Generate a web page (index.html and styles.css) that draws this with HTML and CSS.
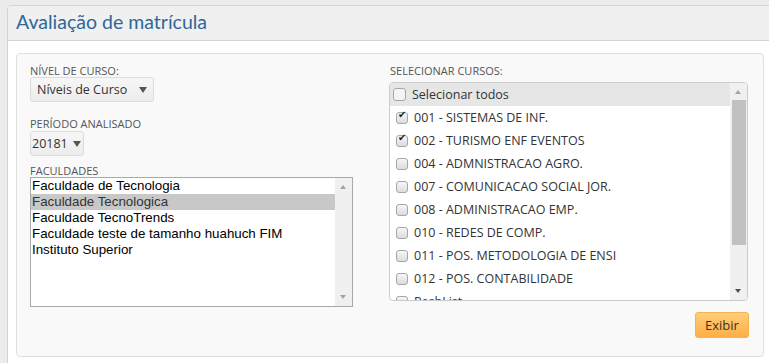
FILE: index.html
```html
<!DOCTYPE html>
<html lang="pt-BR">
<head>
  <meta charset="UTF-8">
  <meta name="viewport" content="width=device-width, initial-scale=1.0">
  <title>Avaliação de matrícula</title>
  <link rel="stylesheet" href="styles.css">
</head>
<body>
  <div class="panel">
    <div class="panel-heading">
      <h1 class="panel-title">Avaliação de matrícula</h1>
    </div>

    <div class="panel-body">
      <div class="well">
        <!-- Filtros -->
        <div class="col">
          <div class="field-label">NÍVEL DE CURSO:</div>
          <div class="select select-nivel"><span>Níveis de Curso</span><span class="caret"></span></div>

          <div class="field-label label-periodo">PERÍODO ANALISADO</div>
          <div class="select select-periodo"><span>20181</span><span class="caret"></span></div>

          <div class="field-label label-faculdades">FACULDADES</div>
          <div class="listbox">
            <ul class="listbox-items">
              <li>Faculdade de Tecnologia</li>
              <li class="selected">Faculdade Tecnologica</li>
              <li>Faculdade TecnoTrends</li>
              <li>Faculdade teste de tamanho huahuch FIM</li>
              <li>Instituto Superior</li>
            </ul>
            <div class="scrollbar">
              <span class="arrow-up"></span>
              <span class="track"></span>
              <span class="arrow-down"></span>
            </div>
          </div>
        </div>

        <!-- Cursos -->
        <div class="col">
          <div class="field-label label-cursos">SELECIONAR CURSOS:</div>
          <div class="course-list">
            <div class="course-items">
              <div class="course select-all"><span class="cb"></span>Selecionar todos</div>
              <div class="course"><span class="cb checked"></span>001 - SISTEMAS DE INF.</div>
              <div class="course"><span class="cb checked"></span>002 - TURISMO ENF EVENTOS</div>
              <div class="course"><span class="cb"></span>004 - ADMNISTRACAO AGRO.</div>
              <div class="course"><span class="cb"></span>007 - COMUNICACAO SOCIAL JOR.</div>
              <div class="course"><span class="cb"></span>008 - ADMINISTRACAO EMP.</div>
              <div class="course"><span class="cb"></span>010 - REDES DE COMP.</div>
              <div class="course"><span class="cb"></span>011 - POS. METODOLOGIA DE ENSI</div>
              <div class="course"><span class="cb"></span>012 - POS. CONTABILIDADE</div>
              <div class="course"><span class="cb"></span>PeshList</div>
            </div>
            <div class="scrollbar">
              <span class="arrow-up"></span>
              <span class="track"><span class="thumb"></span></span>
              <span class="arrow-down dark"></span>
            </div>
          </div>
          <div class="actions">
            <button class="btn-exibir">Exibir</button>
          </div>
        </div>
      </div>
    </div>
  </div>
</body>
</html>
```

FILE: styles.css
```css
html {
  overflow: hidden;
}

body {
  font-family: 'Open Sans', 'Noto Sans', sans-serif;
  margin: 0;
  padding: 0;
  background-color: #ececec;
  color: #333333;
}

.panel {
  margin: 5px -4px 0 7px;
  background-color: #ffffff;
  border: 1px solid #d4d4d4;
  border-radius: 4px;
}

.panel-heading {
  background-color: #f0f0f0;
  border-bottom: 1px solid #d4d4d4;
  border-radius: 4px 4px 0 0;
  height: 34px;
  padding: 0 8px;
}

.panel-title {
  margin: 0;
  font-family: 'Lato', 'Open Sans', sans-serif;
  font-size: 19.5px;
  font-weight: normal;
  line-height: 31px;
  color: #2f679a;
}

.panel-body {
  padding: 12px 8px 20px 8px;
}

.well {
  display: grid;
  grid-template-columns: 359px 359px;
  background-color: #f9f9f9;
  border: 1px solid #e0e0e0;
  border-radius: 4px;
  padding: 10px 13px 18px 13px;
}

.field-label {
  font-size: 11px;
  line-height: 13px;
  color: #555555;
}

.label-periodo {
  margin-top: 15px;
}

.label-faculdades {
  margin-top: 8px;
}

.label-cursos {
  margin-left: 1px;
  margin-bottom: 5px;
}

/* selects */
.select {
  display: flex;
  align-items: center;
  justify-content: space-between;
  box-sizing: border-box;
  height: 25px;
  font-size: 12.5px;
  color: #333333;
  background: linear-gradient(#f7f7f7, #ececec);
  border: 1px solid #dcdcdc;
  border-radius: 3px;
}

.select-nivel {
  width: 124px;
  padding: 0 6px 0 6px;
}

.select-periodo {
  justify-content: flex-start;
  gap: 5px;
  width: 54px;
  padding: 0 0 0 1px;
  margin-top: 1px;
}

.caret {
  width: 0;
  height: 0;
  border-left: 4px solid transparent;
  border-right: 4px solid transparent;
  border-top: 6px solid #555555;
}

/* faculdades list */
.listbox {
  display: flex;
  width: 323px;
  height: 130px;
  box-sizing: border-box;
  border: 1px solid #a9a9a9;
  background-color: #ffffff;
}

.listbox-items {
  flex: 1;
  list-style: none;
  margin: 0;
  padding: 0;
  font-family: 'Liberation Sans', Arial, sans-serif;
  font-size: 13.33px;
  line-height: 16px;
  color: #000000;
}

.listbox-items li {
  padding-left: 1px;
  white-space: nowrap;
}

.listbox-items li.selected {
  background-color: #c8c8c8;
  color: #333333;
}

.scrollbar {
  display: flex;
  flex-direction: column;
  align-items: center;
  width: 17px;
  background-color: #f0f0f0;
}

.arrow-up, .arrow-down {
  flex: none;
  height: 17px;
  width: 17px;
  position: relative;
}

.arrow-up::after, .arrow-down::after {
  content: '';
  position: absolute;
  left: 5px;
  top: 7px;
  border-left: 3.5px solid transparent;
  border-right: 3.5px solid transparent;
}

.arrow-up::after {
  border-bottom: 4px solid #a3a3a3;
}

.arrow-down::after {
  border-top: 4px solid #a3a3a3;
  top: 6px;
}

.arrow-down.dark::after {
  border-top-color: #505050;
}

.track {
  flex: 1;
  width: 100%;
  display: flex;
  justify-content: center;
}

.thumb {
  width: 14px;
  height: 145px;
  background-color: #c1c1c1;
}

/* cursos list */
.course-list {
  display: flex;
  height: 219px;
  box-sizing: border-box;
  border: 1px solid #cccccc;
  border-radius: 4px;
  background-color: #ffffff;
  overflow: hidden;
}

.course-items {
  flex: 1;
  overflow: hidden;
}

.course {
  display: flex;
  align-items: center;
  height: 23px;
  padding-left: 6px;
  font-size: 12.5px;
  color: #333333;
  white-space: nowrap;
}

.course.select-all {
  background-color: #e6e6e6;
  padding-left: 3px;
  font-size: 12.5px;
}

.cb {
  display: inline-block;
  position: relative;
  box-sizing: border-box;
  width: 12px;
  height: 12px;
  margin-right: 6px;
  border: 1px solid #a6a6a6;
  border-radius: 3px;
  background: linear-gradient(#f6f6f6, #dcdcdc);
}

.select-all .cb {
  width: 13px;
  height: 13px;
  background: #f4f4f4;
}

.cb.checked::after {
  content: '\2714';
  position: absolute;
  left: 1px;
  top: -4px;
  font-family: 'DejaVu Sans', sans-serif;
  font-size: 10px;
  color: #222222;
}

.actions {
  display: flex;
  justify-content: flex-end;
  margin-top: 11px;
}

.btn-exibir {
  width: 54px;
  height: 26px;
  margin-right: -1px;
  font-family: 'Open Sans', sans-serif;
  font-size: 13px;
  color: #3d3320;
  background: linear-gradient(#ffcd78, #ffae45);
  border: 1px solid #f3b352;
  border-radius: 3px;
  padding: 0;
}
```
